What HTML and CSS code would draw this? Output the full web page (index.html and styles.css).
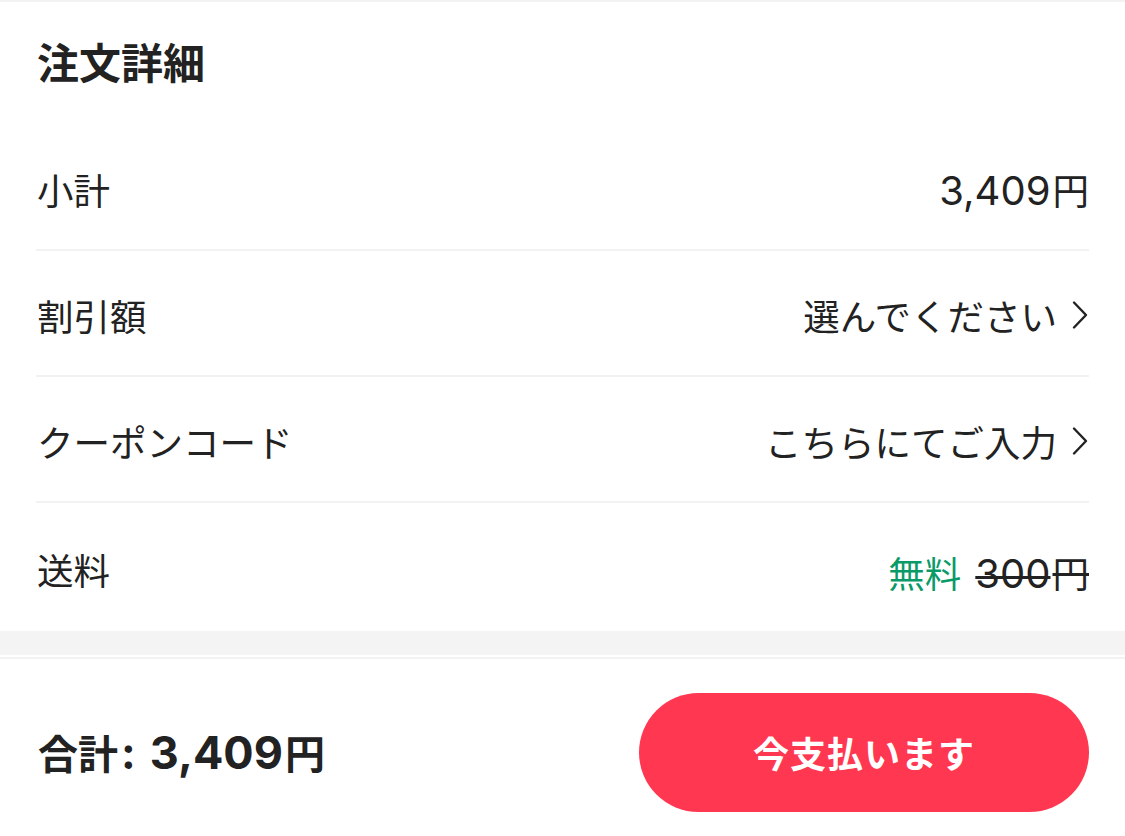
FILE: index.html
```html
<!DOCTYPE html>
<html lang="ja">
<head>
<meta charset="utf-8">
<title>注文詳細</title>
<link rel="stylesheet" href="styles.css">
</head>
<body>
<div class="page">
  <section class="card">
    <h1 class="title">注文詳細</h1>
    <div class="row">
      <span class="label">小計</span>
      <span class="value"><span class="num">3,409</span>円</span>
    </div>
    <div class="row">
      <span class="label">割引額</span>
      <span class="value link">選んでください<svg class="chev" viewBox="0 0 18 30" width="18" height="30"><path d="M3 2.5 L15 15 L3 27.5" fill="none" stroke="#222" stroke-width="2.4" stroke-linecap="round" stroke-linejoin="round"/></svg></span>
    </div>
    <div class="row">
      <span class="label">クーポンコード</span>
      <span class="value link">こちらにてご入力<svg class="chev" viewBox="0 0 18 30" width="18" height="30"><path d="M3 2.5 L15 15 L3 27.5" fill="none" stroke="#222" stroke-width="2.4" stroke-linecap="round" stroke-linejoin="round"/></svg></span>
    </div>
    <div class="row last">
      <span class="label">送料</span>
      <span class="value ship"><span class="free">無料</span><span class="old"><span class="num">300</span>円</span></span>
    </div>
  </section>
  <div class="band"></div>
  <footer class="footer">
    <div class="total">合計<span class="colon">:</span> <span class="num">3,409</span>円</div>
    <button class="pay">今支払います</button>
  </footer>
</div>
</body>
</html>
```

FILE: styles.css
```css
* { box-sizing: border-box; }
html, body { margin: 0; padding: 0; background: #fff; }
body {
  font-family: "Noto Sans CJK JP", sans-serif;
  color: #222;
}
.page {
  width: 1125px;
  height: 836px;
  overflow: hidden;
  border-top: 2px solid #f2f2f2;
}
.card { padding: 0 36px; }
.title {
  margin: 0;
  height: 123px;
  display: flex;
  align-items: center;
  font-size: 42px;
  font-weight: 700;
  padding-left: 1px;
  padding-bottom: 6px;
}
.row {
  height: 126px;
  display: flex;
  justify-content: space-between;
  align-items: center;
  border-bottom: 2px solid #f2f2f2;
  font-size: 36.5px;
  padding-top: 4px;
}
.row.last { border-bottom: 0; height: 128px; }
.label { padding-left: 1px; }
.value { display: flex; align-items: baseline; }
.link { align-items: center; }
.num {
  font-family: "Inter", "Liberation Sans", sans-serif;
  font-size: 40px;
  margin-right: 2px;
}
.chev { margin-left: 14px; }
.ship { padding-top: 6px; }
.free { color: #0a9a68; margin-right: 14px; }
.old { text-decoration: line-through; text-decoration-thickness: 3px; }
.band {
  height: 24px;
  background: #f4f4f4;
  border-bottom: 2px solid #fff;
  box-sizing: content-box;
}
.footer {
  border-top: 2px solid #f2f2f2;
  height: 176px;
  padding: 12px 36px 0 38px;
  display: flex;
  justify-content: space-between;
  align-items: center;
}
.total { font-size: 40px; font-weight: 700; }
.total .colon { font-family: "Inter", sans-serif; font-size: 44px; margin-left: 3px; margin-right: 4px; }
.total .num { font-size: 45px; font-weight: 700; margin-left: 1px; }
.pay {
  width: 450px;
  height: 119px;
  border: 0;
  border-radius: 60px;
  background: #ff3750;
  color: #fff;
  font-family: "Noto Sans CJK JP", sans-serif;
  font-size: 36px;
  font-weight: 700;
  letter-spacing: 1px;
}
```
